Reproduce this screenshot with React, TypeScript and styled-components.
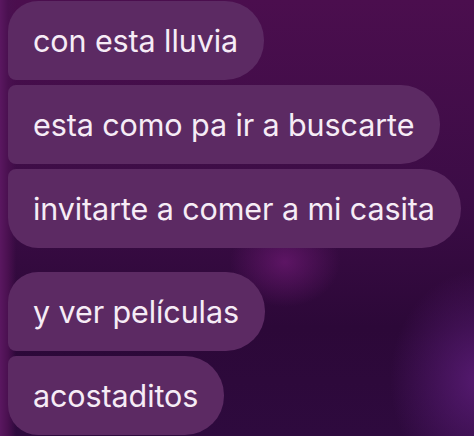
import React from "react";
import styled, { createGlobalStyle } from "styled-components";

const Global = createGlobalStyle`
  html, body {
    margin: 0;
    padding: 0;
    width: 474px;
    height: 436px;
    overflow: hidden;
    background: #3a0b42;
  }
`;

const Screen = styled.div`
  width: 474px;
  height: 436px;
  overflow: hidden;
  box-sizing: border-box;
  padding: 0 0 0 8px;
  background:
    radial-gradient(ellipse 55px 45px at 285px 262px, rgba(120, 28, 125, 0.6), rgba(120, 28, 125, 0) 100%),
    radial-gradient(ellipse 90px 110px at 480px 380px, rgba(95, 30, 125, 0.8), rgba(95, 30, 125, 0) 100%),
    linear-gradient(90deg, #5a1760 0px, #4a1050 8px, rgba(0, 0, 0, 0) 16px),
    linear-gradient(180deg, #4b0e4e 0%, #3c0c46 45%, #2c0838 75%, #2e0a3e 100%);
  font-family: Inter, "Noto Sans", "Liberation Sans", sans-serif;
`;

const Thread = styled.div`
  display: flex;
  flex-direction: column;
  align-items: flex-start;
  padding-top: 1px;
`;

const Group = styled.div`
  display: flex;
  flex-direction: column;
  align-items: flex-start;
  gap: 5px;
  & + & {
    margin-top: 24px;
  }
`;

const Bubble = styled.div<{ $top: number; $bottom: number }>`
  box-sizing: border-box;
  height: 79px;
  display: flex;
  align-items: center;
  padding: 0 26px 0 25px;
  background: #5c2a63;
  color: #f6ecf6;
  font-size: 30.5px;
  letter-spacing: -0.1px;
  white-space: nowrap;
  border-radius: 39px;
  border-top-left-radius: ${(p) => p.$top}px;
  border-bottom-left-radius: ${(p) => p.$bottom}px;
`;

const groups: { text: string; top: number; bottom: number }[][] = [
  [
    { text: "con esta lluvia", top: 30, bottom: 8 },
    { text: "esta como pa ir a buscarte", top: 8, bottom: 8 },
    { text: "invitarte a comer a mi casita", top: 8, bottom: 30 },
  ],
  [
    { text: "y ver películas", top: 30, bottom: 8 },
    { text: "acostaditos", top: 8, bottom: 30 },
  ],
];

export default function App() {
  return (
    <>
      <Global />
      <Screen>
        <Thread>
          {groups.map((g, i) => (
            <Group key={i}>
              {g.map((m) => (
                <Bubble key={m.text} $top={m.top} $bottom={m.bottom}>
                  {m.text}
                </Bubble>
              ))}
            </Group>
          ))}
        </Thread>
      </Screen>
    </>
  );
}
